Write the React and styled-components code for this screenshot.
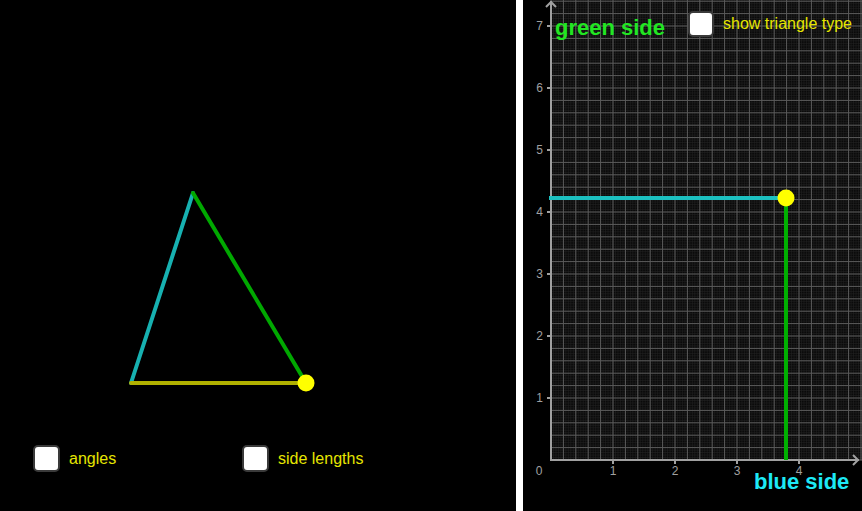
import React from "react";
import styled, { createGlobalStyle } from "styled-components";

const Global = createGlobalStyle`
  html, body { margin: 0; padding: 0; background: #000; overflow: hidden; }
  body { font-family: "Liberation Sans", Arial, sans-serif; }
`;

const Page = styled.div`
  display: flex;
  width: 862px;
  height: 511px;
  background: #000;
`;

const LeftPanel = styled.section`
  width: 516px;
  height: 511px;
  display: flex;
  flex-direction: column;
  background: #000;
`;

const Divider = styled.div`
  width: 7px;
  height: 511px;
  background: #fff;
  flex: none;
`;

const RightPanel = styled.section`
  position: relative;
  flex: 1;
  height: 511px;
  background: #000;
`;

const Canvas = styled.svg`
  display: block;
  width: ${(p) => p.$w}px;
  height: ${(p) => p.$h}px;
`;

const Controls = styled.div`
  display: flex;
  align-items: center;
  height: 27px;
  padding-left: 33px;
`;

const CheckItem = styled.label`
  display: flex;
  align-items: center;
  gap: 9px;
  width: ${(p) => p.$w || "auto"};
  color: #e6e600;
  font-family: "Liberation Sans", Arial, sans-serif;
  font-size: 16px;
`;

const Box = styled.span`
  box-sizing: border-box;
  display: inline-block;
  width: ${(p) => p.$size}px;
  height: ${(p) => p.$size}px;
  background: #fff;
  border: 2px solid #3a3a3a;
  border-radius: 5px;
  flex: none;
`;

const TopBar = styled.div`
  position: absolute;
  top: 0;
  left: 32px;
  right: 0;
  display: flex;
  align-items: flex-start;
  pointer-events: none;
`;

const SideTitle = styled.div`
  font-family: "Liberation Sans", Arial, sans-serif;
  font-weight: bold;
  font-size: 22px;
  line-height: 25px;
  color: ${(p) => p.$color};
`;

const GreenTitle = styled(SideTitle)`
  margin-top: 15px;
  width: 133px;
`;

const TypeToggle = styled(CheckItem)`
  margin-top: 11px;
  gap: 9px;
`;

const BlueTitle = styled(SideTitle)`
  position: absolute;
  left: 231px;
  top: 469px;
`;

function Triangle() {
  return (
    <Canvas $w={516} $h={445} viewBox="0 0 516 445">
      <line x1="131" y1="383" x2="193" y2="193" stroke="#17b1b1" strokeWidth="4" strokeLinecap="round" />
      <line x1="193" y1="193" x2="306" y2="383" stroke="#00a800" strokeWidth="4" strokeLinecap="round" />
      <line x1="131" y1="383" x2="306" y2="383" stroke="#b0b000" strokeWidth="4" strokeLinecap="round" />
      <circle cx="306" cy="383" r="8.5" fill="#ffff00" />
    </Canvas>
  );
}

function Graph() {
  const W = 339;
  const H = 511;
  const ox = 28;
  const oy = 460;
  const u = 62;
  const major = u / 5;
  const minor = major / 5;

  const minorV = [];
  for (let x = ox; x <= W; x += minor) minorV.push(x);
  const minorH = [];
  for (let y = oy; y >= 0; y -= minor) minorH.push(y);
  const majorV = [];
  for (let x = ox; x <= W; x += major) majorV.push(x);
  const majorH = [];
  for (let y = oy; y >= 0; y -= major) majorH.push(y);

  const xTicks = [1, 2, 3, 4];
  const yTicks = [1, 2, 3, 4, 5, 6, 7];

  return (
    <Canvas $w={W} $h={H} viewBox={`0 0 ${W} ${H}`}>
      <rect x={ox} y={0} width={W - ox} height={oy} fill="#0a0a0a" />
      <g stroke="#242424" strokeWidth="0.6">
        {minorV.map((x, i) => (
          <line key={"mv" + i} x1={x} y1={0} x2={x} y2={oy} />
        ))}
        {minorH.map((y, i) => (
          <line key={"mh" + i} x1={ox} y1={y} x2={W} y2={y} />
        ))}
      </g>
      <g stroke="#5c5c5c" strokeWidth="1">
        {majorV.map((x, i) => (
          <line key={"Mv" + i} x1={x} y1={0} x2={x} y2={oy} />
        ))}
        {majorH.map((y, i) => (
          <line key={"Mh" + i} x1={ox} y1={y} x2={W} y2={y} />
        ))}
      </g>
      <g stroke="#a0a0a0" strokeWidth="2" fill="none">
        <line x1={ox} y1={oy + 1} x2={ox} y2={1} />
        <line x1={ox - 1} y1={oy} x2={W - 3} y2={oy} />
        <polyline points={`${ox - 5},${7} ${ox},${2} ${ox + 5},${7}`} />
        <polyline points={`${W - 9},${oy - 5} ${W - 4},${oy} ${W - 9},${oy + 5}`} />
        {xTicks.map((t) => (
          <line key={"xt" + t} x1={ox + t * u} y1={oy} x2={ox + t * u} y2={oy + 4} />
        ))}
        {yTicks.map((t) => (
          <line key={"yt" + t} x1={ox - 4} y1={oy - t * u} x2={ox} y2={oy - t * u} />
        ))}
      </g>
      <g fill="#a0a0a0" fontFamily="Liberation Sans, Arial, sans-serif" fontSize="12">
        <text x={ox - 12} y={oy + 15} textAnchor="middle">0</text>
        {xTicks.map((t) => (
          <text key={"xl" + t} x={ox + t * u} y={oy + 15} textAnchor="middle">{t}</text>
        ))}
        {yTicks.map((t) => (
          <text key={"yl" + t} x={ox - 8} y={oy - t * u + 4} textAnchor="end">{t}</text>
        ))}
      </g>
      <line x1={ox - 2} y1={198} x2={263} y2={198} stroke="#1cc0c0" strokeWidth="4" />
      <line x1={263} y1={198} x2={263} y2={oy} stroke="#00b000" strokeWidth="4" />
      <circle cx={263} cy={198} r="8.5" fill="#ffff00" />
    </Canvas>
  );
}

export default function App() {
  return (
    <>
      <Global />
      <Page>
        <LeftPanel>
          <Triangle />
          <Controls>
            <CheckItem $w="209px">
              <Box $size={27} />
              <span>angles</span>
            </CheckItem>
            <CheckItem>
              <Box $size={27} />
              <span>side lengths</span>
            </CheckItem>
          </Controls>
        </LeftPanel>
        <Divider />
        <RightPanel>
          <Graph />
          <TopBar>
            <GreenTitle $color="#22e622">green side</GreenTitle>
            <TypeToggle>
              <Box $size={26} />
              <span>show triangle type</span>
            </TypeToggle>
          </TopBar>
          <BlueTitle $color="#1de9f6">blue side</BlueTitle>
        </RightPanel>
      </Page>
    </>
  );
}
